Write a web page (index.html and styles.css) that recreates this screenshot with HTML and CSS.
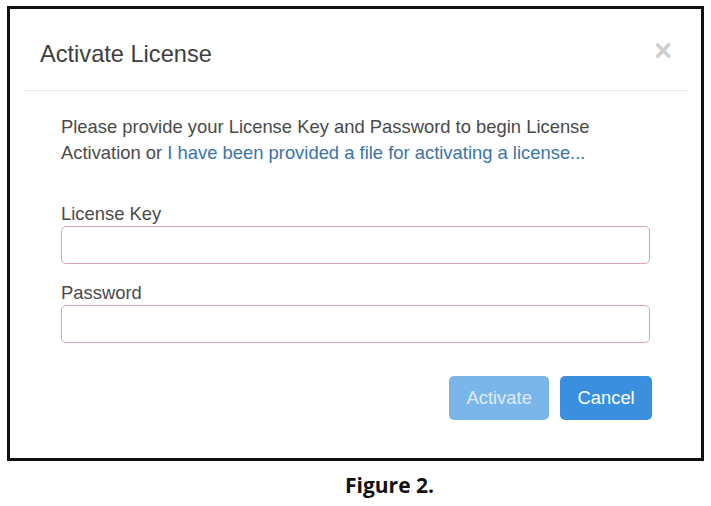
FILE: index.html
```html
<!DOCTYPE html>
<html lang="en">
<head>
<meta charset="utf-8">
<title>Activate License</title>
<link rel="stylesheet" href="styles.css">
</head>
<body>
<div class="figure">
  <div class="modal">
    <div class="modal-header">
      <h4 class="modal-title">Activate License</h4>
      <button class="close" type="button">×</button>
    </div>
    <div class="modal-body">
      <p class="intro">Please provide your License Key and Password to begin License<br>Activation or <a class="link" href="#">I have been provided a file for activating a license...</a></p>
      <label class="field-label label-first">License Key</label>
      <input class="field-input" type="text">
      <label class="field-label">Password</label>
      <input class="field-input" type="password">
    </div>
    <div class="modal-footer">
      <button class="btn btn-disabled" type="button">Activate</button>
      <button class="btn btn-primary" type="button">Cancel</button>
    </div>
  </div>
</div>
<div class="caption">Figure 2.</div>
</body>
</html>
```

FILE: styles.css
```css
html, body {
  margin: 0;
  padding: 0;
  background: #ffffff;
}

body {
  font-family: "Liberation Sans", Arial, sans-serif;
}

.figure {
  box-sizing: border-box;
  width: 697px;
  margin: 6px 0 0 7px;
  border: 3px solid #111111;
  background: #ffffff;
}

.modal {
  margin: 0 13px 0 14px;
  background: #ffffff;
}

.modal-header {
  display: flex;
  justify-content: space-between;
  align-items: flex-start;
  padding: 28.8px 16px 18.4px 16px;
  border-bottom: 1px solid #e8e8e8;
}

.modal-title {
  margin: 0;
  font-size: 23.6px;
  line-height: 33.8px;
  font-weight: normal;
  color: #3e3e3e;
}

.close {
  margin-top: -2px;
  padding: 0;
  border: 0;
  background: transparent;
  font-family: "Liberation Sans", Arial, sans-serif;
  font-size: 31px;
  font-weight: bold;
  line-height: 30px;
  color: #cfcfcf;
}

.modal-body {
  padding: 22.8px 38px 0 37px;
  font-size: 18.4px;
  color: #4a4a4a;
}

.intro {
  margin: 0;
  line-height: 26.3px;
}

.link {
  color: #3b73ab;
  text-decoration: none;
}

.field-label {
  display: block;
  height: 22px;
  line-height: 22px;
  margin: 18px 0 1px;
}

.label-first {
  margin-top: 36.6px;
}

.field-input {
  display: block;
  box-sizing: border-box;
  width: 100%;
  height: 38px;
  margin: 0;
  border: 1px solid #dca2ad;
  border-radius: 5px;
  background: #ffffff;
}

.modal-footer {
  display: flex;
  justify-content: flex-end;
  gap: 11px;
  padding: 33px 36px 38px 0;
}

.btn {
  height: 44px;
  padding: 0 17.3px;
  border: 0;
  border-radius: 5px;
  font-family: "Liberation Sans", Arial, sans-serif;
  font-size: 18.4px;
  color: #ffffff;
}

.btn-disabled {
  background: #7bb6ea;
  color: rgba(255, 255, 255, 0.75);
}

.btn-primary {
  background: #3b8fdf;
}

.caption {
  margin: 11px 0 0 345px;
  font-family: "Open Sans", "Liberation Sans", sans-serif;
  font-size: 21px;
  line-height: 26px;
  font-weight: bold;
  color: #111111;
}
```
